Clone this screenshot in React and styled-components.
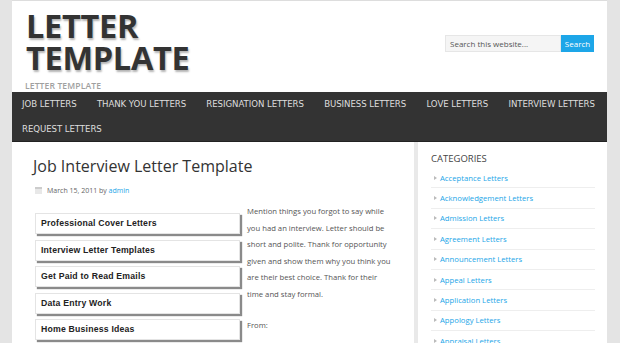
import React from "react";
import styled, { createGlobalStyle } from "styled-components";

const Global = createGlobalStyle`
  html, body { margin: 0; padding: 0; }
  body {
    background: #e4e4e4;
    font-family: "Open Sans", "Liberation Sans", sans-serif;
    width: 620px;
    height: 343px;
    overflow: hidden;
  }
`;

const Wrap = styled.div`
  width: 595px;
  margin-left: 12px;
  background: #fff;
`;

const Header = styled.header`
  height: 92px;
  display: flex;
  justify-content: space-between;
  align-items: flex-start;
  border-top: 1px solid #ddd;
  box-sizing: border-box;
`;

const TitleArea = styled.div`
  padding: 9px 0 0 14px;
`;

const SiteTitle = styled.h1`
  margin: 0;
  font-family: "Open Sans", sans-serif;
  font-weight: 700;
  font-size: 32.5px;
  line-height: 32px;
  color: #333;
  letter-spacing: -0.3px;
  text-shadow: 1px 2px 2px #b5b5b5;
`;

const Tagline = styled.div`
  margin-top: 6.5px;
  margin-left: -1px;
  font-family: "Open Sans", sans-serif;
  font-weight: 600;
  font-size: 8.6px;
  letter-spacing: 0.1px;
  line-height: 10px;
  color: #a0a0a0;
`;

const SearchForm = styled.form`
  display: flex;
  margin: 34px 13px 0 0;
`;

const SearchInput = styled.div`
  width: 116px;
  height: 17px;
  background: #f5f5f5;
  border: 1px solid #e6e6e6;
  box-sizing: border-box;
  font-size: 8px;
  line-height: 15px;
  color: #555;
  padding-left: 4px;
`;

const SearchButton = styled.div`
  width: 33px;
  height: 17px;
  background: #1da6e8;
  color: #fff;
  font-size: 8px;
  line-height: 17px;
  text-align: center;
`;

const Nav = styled.nav`
  background: #333;
  display: flex;
  flex-wrap: wrap;
  padding: 0;
  border-bottom: 1px solid #222;
`;

const NavItem = styled.a`
  display: block;
  height: 24.5px;
  line-height: 24.5px;
  padding: 0 10.3px 0 10px;
  color: #ddd;
  font-family: "DejaVu Sans", sans-serif;
  font-size: 8.6px;
  letter-spacing: -0.07px;
  text-transform: uppercase;
  text-decoration: none;
`;

const Body = styled.div`
  display: flex;
  height: 202px;
  overflow: hidden;
`;

const Main = styled.main`
  width: 406px;
  padding: 14px 0 0 21px;
  box-sizing: border-box;
  border-right: 4px solid #e9e9e9;
`;

const PostTitle = styled.h2`
  margin: 0;
  font-family: "Open Sans", sans-serif;
  font-weight: 400;
  font-size: 16px;
  line-height: 21px;
  color: #333;
`;

const Meta = styled.div`
  display: flex;
  align-items: center;
  gap: 5px;
  margin: 9px 0 0 2px;
  font-size: 7px;
  color: #666;
  & a { color: #1da6e8; text-decoration: none; }
`;

const CalIcon = styled.span`
  width: 7px;
  height: 7px;
  background: #e8e8e8;
  border-top: 2px solid #ccc;
  box-sizing: border-box;
`;

const Columns = styled.div`
  display: flex;
  gap: 7px;
  margin-top: 8px;
  margin-left: 2px;
`;

const LinkList = styled.div`
  width: 205px;
  display: flex;
  flex-direction: column;
  gap: 5.6px;
  padding-top: 10px;
`;

const LinkBox = styled.div`
  height: 21px;
  border: 1px solid #e4e4e4;
  box-shadow: 2px 2px 1px #8a8a8a;
  box-sizing: border-box;
  padding-left: 5px;
  font-family: "Liberation Sans", Arial, sans-serif;
  font-weight: 700;
  font-size: 8.7px;
  letter-spacing: 0.2px;
  line-height: 19px;
  color: #222;
`;

const Text = styled.div`
  width: 160px;
  font-family: "Open Sans", sans-serif;
  font-size: 7.7px;
  line-height: 16.6px;
  color: #555;
  white-space: nowrap;
  & p { margin: 0 0 14px; }
`;

const Sidebar = styled.aside`
  flex: 1;
  padding: 10px 12px 0 13px;
`;

const WidgetTitle = styled.h4`
  margin: 0 0 2px;
  font-family: "Open Sans", sans-serif;
  font-weight: 400;
  font-size: 9.5px;
  line-height: 14px;
  color: #444;
`;

const Cat = styled.div`
  display: flex;
  align-items: center;
  gap: 3px;
  height: 20.4px;
  border-bottom: 1px solid #eee;
  box-sizing: border-box;
  padding-left: 3px;
  font-family: "Open Sans", sans-serif;
  font-size: 7.7px;
  color: #1da6e8;
`;

const Arrow = styled.span`
  width: 0;
  height: 0;
  border-left: 3px solid #bbb;
  border-top: 2.5px solid transparent;
  border-bottom: 2.5px solid transparent;
`;

const navItems = [
  "Job Letters",
  "Thank You Letters",
  "Resignation Letters",
  "Business Letters",
  "Love Letters",
  "Interview Letters",
  "Request Letters",
];

const boxes = [
  "Professional Cover Letters",
  "Interview Letter Templates",
  "Get Paid to Read Emails",
  "Data Entry Work",
  "Home Business Ideas",
];

const cats = [
  "Acceptance Letters",
  "Acknowledgement Letters",
  "Admission Letters",
  "Agreement Letters",
  "Announcement Letters",
  "Appeal Letters",
  "Application Letters",
  "Appology Letters",
  "Appraisal Letters",
];

const paragraph = [
  "Mention things you forgot to say while",
  "you had an interview. Letter should be",
  "short and polite. Thank for opportunity",
  "given and show them why you think you",
  "are their best choice. Thank for their",
  "time and stay formal.",
];

export default function App() {
  return (
    <>
      <Global />
      <Wrap>
        <Header>
          <TitleArea>
            <SiteTitle>
              LETTER
              <br />
              TEMPLATE
            </SiteTitle>
            <Tagline>LETTER TEMPLATE</Tagline>
          </TitleArea>
          <SearchForm>
            <SearchInput>Search this website...</SearchInput>
            <SearchButton>Search</SearchButton>
          </SearchForm>
        </Header>
        <Nav>
          {navItems.map((n) => (
            <NavItem key={n}>{n}</NavItem>
          ))}
        </Nav>
        <Body>
          <Main>
            <PostTitle>Job Interview Letter Template</PostTitle>
            <Meta>
              <CalIcon />
              <span>
                March 15, 2011 by <a href="#">admin</a>
              </span>
            </Meta>
            <Columns>
              <LinkList>
                {boxes.map((b) => (
                  <LinkBox key={b}>{b}</LinkBox>
                ))}
              </LinkList>
              <Text>
                <p>
                  {paragraph.map((line, i) => (
                    <React.Fragment key={i}>
                      {line}
                      {i < paragraph.length - 1 && <br />}
                    </React.Fragment>
                  ))}
                </p>
                <p>From:</p>
              </Text>
            </Columns>
          </Main>
          <Sidebar>
            <WidgetTitle>CATEGORIES</WidgetTitle>
            {cats.map((c) => (
              <Cat key={c}>
                <Arrow />
                {c}
              </Cat>
            ))}
          </Sidebar>
        </Body>
      </Wrap>
    </>
  );
}
